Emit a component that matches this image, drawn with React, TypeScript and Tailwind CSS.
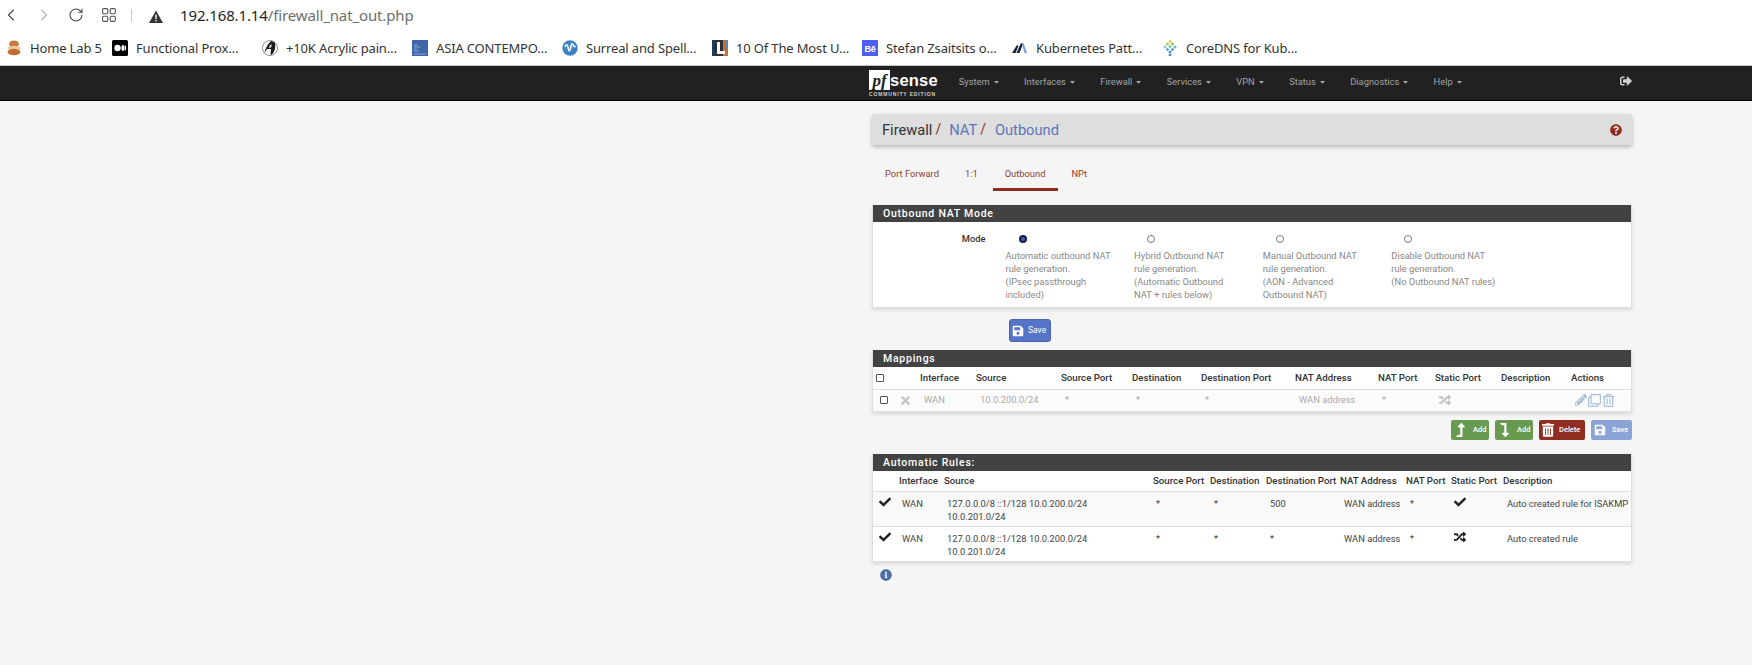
import React from "react";
import { ChevronLeft, ChevronRight, RotateCw } from "lucide-react";
import {
  FaSave, FaPencilAlt, FaRegClone, FaRegTrashAlt, FaTrashAlt, FaRandom, FaCheck, FaTimes,
  FaInfoCircle, FaQuestionCircle, FaLevelUpAlt, FaLevelDownAlt, FaSignOutAlt, FaCaretDown,
} from "react-icons/fa";

const Burger = () => (
  <svg viewBox="0 0 16 16" className="w-4 h-4">
    <ellipse cx="8" cy="4" rx="5" ry="3.5" fill="#c8793a" />
    <ellipse cx="8" cy="8" rx="7" ry="2.2" fill="#e8c9a0" />
    <ellipse cx="8" cy="12" rx="6.5" ry="3.3" fill="#c26c32" />
  </svg>
);
const Medium = () => (
  <svg viewBox="0 0 16 16" className="w-4 h-4">
    <rect width="16" height="16" rx="1.5" fill="#000" />
    <circle cx="5.5" cy="8" r="3.2" fill="#fff" />
    <ellipse cx="11" cy="8" rx="1.6" ry="3" fill="#fff" />
    <ellipse cx="13.6" cy="8" rx=".6" ry="2.7" fill="#fff" />
  </svg>
);
const Acrylic = () => (
  <svg viewBox="0 0 16 16" className="w-4 h-4">
    <circle cx="8" cy="8" r="7.5" fill="#fff" stroke="#222" strokeWidth=".5" />
    <path d="M9 1C6 4 3 9 2.5 13L5 9h4l-.5 6C12 14 14 8 13 3 12 2 10 1 9 1Z" fill="#1a1a1a" />
    <path d="M6.5 7.5 9.5 3.5 9.2 7.5Z" fill="#fff" />
  </svg>
);
const Asia = () => (
  <svg viewBox="0 0 16 16" className="w-4 h-4">
    <rect width="16" height="16" fill="#3f66a8" />
    <path d="M2 5h4M2 7h6M2 9h3M2 11h5M2 14h12" stroke="#a9bfe0" strokeWidth=".7" />
  </svg>
);
const Surreal = () => (
  <svg viewBox="0 0 16 16" className="w-4 h-4">
    <circle cx="8" cy="8" r="7.7" fill="#3d83c4" />
    <path d="M3 7c1-3 2.500-3 3 0s1 5 2 3 1-7 2.500-6 1 4 3 2" fill="none" stroke="#fff" strokeWidth="1.500" />
  </svg>
);
const Mostu = () => (
  <svg viewBox="0 0 16 16" className="w-4 h-4">
    <rect width="16" height="16" fill="#2d2f33" />
    <path d="M11 0h5v16h-5Z" fill="#c2743a" />
    <path d="M13 0h3v9h-3Z" fill="#5d86a8" />
    <path d="M5 2h3v9h5v3H5Z" fill="#fff" />
    <path d="M0 0h3v16H0Z" fill="#1b3c56" />
  </svg>
);
const Behance = () => (
  <div className="w-4 h-4 bg-[#4d5ff5] text-white text-[9px] leading-[18px] font-bold text-center font-['Liberation_Sans',sans-serif]">Bē</div>
);
const Kube = () => (
  <svg viewBox="0 0 16 16" className="w-4 h-4">
    <path d="M0 13 5 5l1.500 1-3 7Z" fill="#14213d" />
    <path d="M4.500 13 9 3l2 1-3.500 9Z" fill="#14213d" />
    <path d="M10 4l1.500-1 3.500 10h-2.500Z" fill="#7d9bd8" />
  </svg>
);
const CoreDns = () => (
  <svg viewBox="0 0 16 16" className="w-4 h-4">
    {[
      [8, 1.5, "#c5d34a"], [5.500, 4, "#b6cc3e"], [10.500, 4, "#9dc23d"],
      [3, 7, "#8fc6d8"], [8, 6.500, "#7ec0a8"], [13, 7, "#6bb6c8"],
      [5.500, 9.500, "#5fa8d0"], [10.500, 9.500, "#5b9ad0"], [8, 12, "#5b8fd0"], [8, 15, "#5b86c8"],
    ].map(([x, y, c], i) => (
      <rect key={i} x={(x as number) - 1.3} y={(y as number) - 1.3} width="2.600" height="2.600" fill={c as string} transform={`rotate(45 ${x} ${y})`} />
    ))}
  </svg>
);

const bookmarks: [React.ReactNode, string][] = [
  [<Burger />, "Home Lab 5"],
  [<Medium />, "Functional Prox…"],
  [<Acrylic />, "+10K Acrylic pain…"],
  [<Asia />, "ASIA CONTEMPO…"],
  [<Surreal />, "Surreal and Spell…"],
  [<Mostu />, "10 Of The Most U…"],
  [<Behance />, "Stefan Zsaitsits o…"],
  [<Kube />, "Kubernetes Patt…"],
  [<CoreDns />, "CoreDNS for Kub…"],
];

const navItems = ["System", "Interfaces", "Firewall", "Services", "VPN", "Status", "Diagnostics", "Help"];

const Panel = ({ title, children }: { title: string; children: React.ReactNode }) => (
  <section className="bg-white border-x border-b border-[#dedede] shadow-[0_2px_4px_rgba(0,0,0,0.12)]">
    <h2 className="bg-[#424242] text-white text-[10.5px] font-medium tracking-[0.75px] pl-[10px] flex items-center h-[17px]">{title}</h2>
    {children}
  </section>
);

const Radio = ({ on }: { on?: boolean }) => (
  <span className={on
    ? "block w-[4px] h-[4px] rounded-full bg-[#3f5fc8] border-2 border-[#1c1c38] box-content"
    : "block w-[6px] h-[6px] rounded-full border border-[#777] box-content"} />
);

const modes = [
  ["Automatic outbound NAT", "rule generation.", "(IPsec passthrough", "included)"],
  ["Hybrid Outbound NAT", "rule generation.", "(Automatic Outbound", "NAT + rules below)"],
  ["Manual Outbound NAT", "rule generation.", "(AON - Advanced", "Outbound NAT)"],
  ["Disable Outbound NAT", "rule generation.", "(No Outbound NAT rules)"],
];

const mapWidths = ["w-[27px]", "w-[17px]", "w-[56px]", "w-[85px]", "w-[71px]", "w-[69px]", "w-[94px]", "w-[83px]", "w-[57px]", "w-[66px]", "w-[70px]", "w-[63px]"];
const mapHeads = ["", "", "Interface", "Source", "Source Port", "Destination", "Destination Port", "NAT Address", "NAT Port", "Static Port", "Description", "Actions"];

const autoWidths = ["w-[23px]", "w-[45px]", "w-[209px]", "w-[57px]", "w-[56px]", "w-[74px]", "w-[66px]", "w-[45px]", "w-[52px]", "w-[131px]"];
const autoHeads = ["", "Interface", "Source", "Source Port", "Destination", "Destination Port", "NAT Address", "NAT Port", "Static Port", "Description"];

const Btn = ({ icon, label, className }: { icon: React.ReactNode; label: string; className: string }) => (
  <button className={`flex items-center h-[20px] rounded-[2px] text-white text-[7.5px] font-medium ${className}`}>
    {icon}
    <span>{label}</span>
  </button>
);

const autoRows = [
  { port: "500", static: <FaCheck className="w-3 h-3 text-[#212121]" />, desc: "Auto created rule for ISAKMP", bg: "bg-[#f9f9f9]" },
  { port: "*", static: <FaRandom className="w-3 h-3 text-[#212121]" />, desc: "Auto created rule", bg: "bg-white" },
];

export default function App() {
  return (
    <div className="min-h-[665px] bg-[#f5f5f5] font-['Roboto',sans-serif] overflow-hidden">
      {/* Browser chrome */}
      <header className="bg-white h-[65px] border-b border-[#c9c9c9] box-content">
        <div className="h-[30px] flex items-center text-[#333]">
          <ChevronLeft className="w-5 h-5 ml-[1px] text-[#4a4a4a]" strokeWidth={1.4} />
          <ChevronRight className="w-5 h-5 ml-[13px] text-[#b5b5b5]" strokeWidth={1.4} />
          <RotateCw className="w-4 h-4 ml-[14px] text-[#4a4a4a]" strokeWidth={1.6} />
          <svg viewBox="0 0 14 14" className="w-[14px] h-[14px] ml-[18px]" fill="none" stroke="#555" strokeWidth="1.1">
            <rect x=".6" y=".6" width="5.200" height="5.200" rx="1.200" />
            <rect x="8.200" y=".6" width="5.200" height="5.200" rx="1.200" />
            <rect x=".6" y="8.200" width="5.200" height="5.200" rx="1.200" />
            <rect x="8.200" y="8.200" width="5.200" height="5.200" rx="1.200" />
          </svg>
          <span className="w-px h-[13px] bg-[#c8c8c8] ml-[15px]" />
          <svg viewBox="0 0 14 13" className="w-[14px] h-[13px] ml-[17px] mt-[3px]">
            <path d="M7 0.500 14 13H0Z" fill="#333" />
            <rect x="6.300" y="4.500" width="1.400" height="4.500" fill="#fff" />
            <rect x="6.300" y="10" width="1.400" height="1.400" fill="#fff" />
          </svg>
          <div className="ml-[17px] text-[15px] font-['Noto_Sans',sans-serif] tracking-[-0.13px]">
            <span className="text-[#1f1f1f]">192.168.1.14</span>
            <span className="text-[#6e6e6e]">/firewall_nat_out.php</span>
          </div>
        </div>
        <nav className="h-[35px] flex items-start pl-[6px] pt-[10px] font-['Noto_Sans',sans-serif] text-[13px] leading-[16px] tracking-[-0.15px] text-[#333]">
          {bookmarks.map(([icon, label], i) => (
            <div key={i} className={`flex items-center gap-[8px] whitespace-nowrap ${i === 0 ? "w-[106px]" : "w-[150px]"}`}>
              {icon}
              <span>{label}</span>
            </div>
          ))}
        </nav>
      </header>

      {/* pfSense navbar */}
      <div className="h-[34px] bg-[#212121] border-b border-black flex items-center pl-[869px] pr-[120px] box-content text-[#a3a3a3]">
        <div className="w-[71px] flex flex-col items-start text-white">
          <div className="flex items-center h-[21px]">
            <span className="bg-white text-[#212121] text-[17px] font-bold italic w-[21px] h-[20px] leading-[21px] text-center font-['Liberation_Serif',serif]">pf</span>
            <span className="text-[16.5px] font-bold leading-[20px] tracking-[0.2px] font-['Liberation_Sans',sans-serif]">sense</span>
          </div>
          <span className="text-[5px] font-bold tracking-[0.85px] leading-[6px] mt-[1px] font-['Liberation_Sans',sans-serif] text-[#d0d0d0] whitespace-nowrap">COMMUNITY EDITION</span>
        </div>
        <ul className="flex ml-[6px] -mt-[2px] text-[9.33px]">
          {navItems.map((n) => (
            <li key={n} className="flex items-center px-[12.7px] whitespace-nowrap">
              {n}
              <FaCaretDown className="w-[5px] h-[8px] ml-[4px]" />
            </li>
          ))}
        </ul>
        <FaSignOutAlt className="w-3 h-3 text-[#cfcfcf] ml-auto -mt-[4px]" />
      </div>

      {/* Main */}
      <main className="ml-[872px] w-[760px]">
        <div className="mt-[13px] h-[31px] bg-[#dedede] rounded-[2px] shadow-[0_2px_4px_rgba(0,0,0,0.25)] flex items-center justify-between pl-[10px] pr-[10px] text-[14.67px]">
          <div className="flex items-center">
            <span className="text-[#333]">Firewall</span>
            <span className="text-[#8f2d20] ml-[3px] text-[14px]">/</span>
            <span className="text-[#5a76bc] ml-[8px]">NAT</span>
            <span className="text-[#8f2d20] ml-[3px] text-[14px]">/</span>
            <span className="text-[#5a76bc] ml-[9px]">Outbound</span>
          </div>
          <FaQuestionCircle className="w-3 h-3 text-[#8f2d20]" />
        </div>

        <ul className="flex mt-[17px] h-[28px] text-[9.33px] text-[#8f3d30]">
          <li className="pl-[13px] pr-[26px] pt-[5px]">Port Forward</li>
          <li className="pr-[15px] pt-[5px]">1:1</li>
          <li className="pl-[12px] pr-[13px] pt-[5px] border-b-[3px] border-[#8f2d20] box-content h-[21px] -mb-[3px]">Outbound</li>
          <li className="pl-[13px] pt-[5px]">NPt</li>
        </ul>

        <div className="mt-[15px]">
          <Panel title="Outbound NAT Mode">
            <div className="h-[85px] flex pt-[10px] text-[9.33px] leading-[13px]">
              <div className="w-[112.5px] text-right font-medium text-[#333]">Mode</div>
              <div className="flex ml-[20px]">
                {modes.map((m, i) => (
                  <div key={i} className="w-[128.6px] text-[#888]">
                    <div className="h-[17px] pl-[13px] flex items-start pt-[3px]"><Radio on={i === 0} /></div>
                    {m.map((l) => <div key={l} className="whitespace-nowrap">{l}</div>)}
                  </div>
                ))}
              </div>
            </div>
          </Panel>
        </div>

        <button className="mt-[11px] ml-[137px] w-[42px] h-[23px] bg-[#5574c8] rounded-[3px] border border-[#4865b5] text-white flex items-center pl-[2px] text-[8.5px]">
          <FaSave className="w-3 h-3 mr-[4px]" /> Save
        </button>

        <div className="mt-[8px]">
          <Panel title="Mappings">
            <table className="table-fixed w-[758px] border-collapse text-[9.33px]">
              <colgroup>{mapWidths.map((w, i) => <col key={i} className={w} />)}</colgroup>
              <thead>
                <tr className="h-[22px] border-b border-[#dedede] text-left text-[#333] text-[9.7px]">
                  {mapHeads.map((h, i) => (
                    <th key={i} className="font-medium pl-[3px] pt-[2px] whitespace-nowrap">
                      {i === 0 && <span className="block w-[6px] h-[6px] border border-[#555] rounded-[1px] box-content -mt-[2px]" />}
                      {h}
                    </th>
                  ))}
                </tr>
              </thead>
              <tbody>
                <tr className="h-[22px] text-[#aaa] bg-[#fbfbfb]">
                  <td className="pl-[7px]"><span className="block w-[6px] h-[6px] border border-[#555] rounded-[1px] box-content" /></td>
                  <td className="pl-0"><FaTimes className="w-[13px] h-[13px] -ml-[1px] text-[#c5c5c5]" /></td>
                  <td className="pl-[7px]">WAN</td>
                  <td className="pl-[7px]">10.0.200.0/24</td>
                  <td className="pl-[7px]">*</td>
                  <td className="pl-[7px]">*</td>
                  <td className="pl-[7px]">*</td>
                  <td className="pl-[7px] whitespace-nowrap">WAN address</td>
                  <td className="pl-[7px]">*</td>
                  <td className="pl-[7px]"><FaRandom className="w-3 h-3 text-[#c0c0c0]" /></td>
                  <td></td>
                  <td className="pl-[7px]">
                    <div className="flex items-center gap-[1px] text-[#a9bfd8]">
                      <FaPencilAlt className="w-3 h-3" />
                      <FaRegClone className="w-[13px] h-[13px]" />
                      <FaRegTrashAlt className="w-[13px] h-[13px]" />
                    </div>
                  </td>
                </tr>
              </tbody>
            </table>
          </Panel>
        </div>

        <div className="flex justify-end gap-[6px] mt-[8px]">
          <Btn icon={<FaLevelUpAlt className="w-[13px] h-[14px] ml-[3px] mr-[6px]" />} label="Add" className="w-[38px] bg-[#689b4f]" />
          <Btn icon={<FaLevelDownAlt className="w-[13px] h-[14px] ml-[3px] mr-[6px]" />} label="Add" className="w-[38px] bg-[#689b4f]" />
          <Btn icon={<FaTrashAlt className="w-[12px] h-[14px] ml-[3px] mr-[5px]" />} label="Delete" className="w-[46px] bg-[#8f2d20]" />
          <Btn icon={<FaSave className="w-[12px] h-[12px] ml-[3px] mr-[6px]" />} label="Save" className="w-[41px] bg-[#8ca3d8]" />
        </div>

        <div className="mt-[14px]">
          <Panel title="Automatic Rules:">
            <table className="table-fixed w-[758px] border-collapse text-[9.33px] leading-[13px] text-[#444]">
              <colgroup>{autoWidths.map((w, i) => <col key={i} className={w} />)}</colgroup>
              <thead>
                <tr className="h-[20px] border-b border-[#dedede] text-left text-[#333] text-[9.7px]">
                  {autoHeads.map((h, i) => (
                    <th key={i} className="font-medium pl-[3px] whitespace-nowrap">{h}</th>
                  ))}
                </tr>
              </thead>
              <tbody>
                {autoRows.map((r, i) => (
                  <tr key={i} className={`h-[35px] align-top ${i === 0 ? "border-b border-[#dedede]" : ""} ${r.bg}`}>
                    <td className="pl-[6px] pt-[4px]"><FaCheck className="w-3 h-3 text-[#212121]" /></td>
                    <td className="pl-[6px] pt-[5px]">WAN</td>
                    <td className="pl-[6px] pt-[5px]">127.0.0.0/8 ::1/128 10.0.200.0/24<br />10.0.201.0/24</td>
                    <td className="pl-[6px] pt-[5px]">*</td>
                    <td className="pl-[7px] pt-[5px]">*</td>
                    <td className="pl-[7px] pt-[5px]">{r.port}</td>
                    <td className="pl-[7px] pt-[5px] whitespace-nowrap">WAN address</td>
                    <td className="pl-[7px] pt-[5px]">*</td>
                    <td className="pl-[6px] pt-[4px]">{r.static}</td>
                    <td className="pl-[7px] pt-[5px] whitespace-nowrap">{r.desc}</td>
                  </tr>
                ))}
              </tbody>
            </table>
          </Panel>
        </div>

        <FaInfoCircle className="w-3 h-3 text-[#4f6ea5] ml-[8px] mt-[7px]" />
      </main>
    </div>
  );
}
